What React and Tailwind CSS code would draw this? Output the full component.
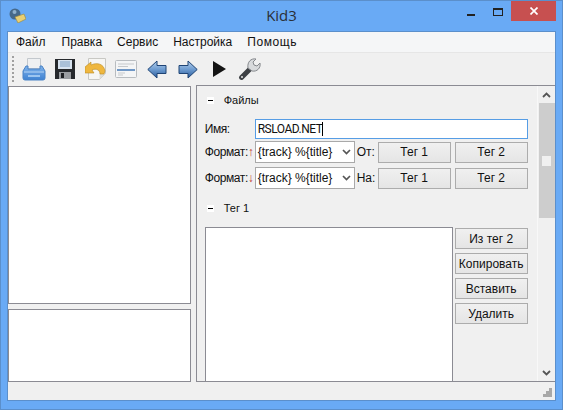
const font = { fontFamily: '"Liberation Sans", Arial, sans-serif' };

const Printer = () => (
  <svg width="24" height="24" viewBox="0 0 24 24">
    <defs>
      <linearGradient id="tray" x1="0" y1="0" x2="0" y2="1">
        <stop offset="0" stopColor="#7fb2ea" />
        <stop offset="1" stopColor="#3f82d2" />
      </linearGradient>
    </defs>
    <path d="M5.5 1.5h13v10h-13z" fill="#eef0f2" stroke="#c3c8cd" />
    <path d="M4 9h2v3h12V9h2l3 5v7a2 2 0 0 1-2 2H3a2 2 0 0 1-2-2v-7z" fill="url(#tray)" stroke="#4a83c6" />
    <path d="M2 15h20" stroke="#b5d4f5" />
    <path d="M6 18h12v2H6z" fill="#9cc5f0" />
  </svg>
);

const Floppy = () => (
  <svg width="20" height="20" viewBox="0 0 20 20">
    <path d="M0 0h20v20H0z" fill="#26292d" />
    <path d="M3 1h14v9H3z" fill="#d7e3f0" />
    <path d="M5 3h10M5 5h10M5 7h10" stroke="#7d9ec2" />
    <path d="M4 13h12v7H4z" fill="#9a9da1" />
    <path d="M6 14h3v5H6z" fill="#1e2023" />
  </svg>
);

const Revert = () => (
  <svg width="21" height="22" viewBox="0 0 21 22">
    <path d="M3.5 .5h17v15l-6 6h-11z" fill="#f6f6f4" stroke="#c8c8c4" />
    <path d="M14.5 21.5v-6h6z" fill="#dededa" />
    <path d="M0 9l6-5v3c6-3 13-1 14 6l-1 3h-4c0-4-4-6-8-4l2 3H0z" fill="#efb73e" stroke="#b98a22" strokeWidth="0.6" />
  </svg>
);

const Tags = () => (
  <svg width="22" height="18" viewBox="0 0 22 18">
    <rect x="0.5" y="0.5" width="21" height="17" rx="1" fill="#f4f5f6" stroke="#b8bcc0" />
    <path d="M3 4h16" stroke="#c6c9cc" />
    <path d="M3 6.5h10" stroke="#c6c9cc" />
    <path d="M2 9h18v2H2z" fill="#6f97c6" />
    <path d="M3 13h7M3 15h5" stroke="#c6c9cc" />
  </svg>
);

const Arrow = ({ flip }) => (
  <svg width="20" height="19" viewBox="0 0 20 19" className={flip ? "-scale-x-100" : ""}>
    <defs>
      <linearGradient id="ar" x1="0" y1="0" x2="0" y2="1">
        <stop offset="0" stopColor="#b5d0ec" />
        <stop offset="0.5" stopColor="#6d9bd0" />
        <stop offset="1" stopColor="#2a5a9a" />
      </linearGradient>
    </defs>
    <path d="M.8 9.5L10 1v4.5h9v8h-9V18z" fill="url(#ar)" stroke="#1f4475" />
  </svg>
);

const Play = () => (
  <svg width="14" height="16" viewBox="0 0 14 16">
    <path d="M1 0l13 8-13 8z" fill="#141414" />
  </svg>
);

const Wrench = () => (
  <svg width="23" height="24" viewBox="0 0 23 24">
    <path d="M1.5 19l9-9 3.5 3.5-9 9a2.5 2.5 0 0 1-3.5-3.5z" fill="#3d4044" />
    <path d="M10 11c-1-6 3-10 8-9l-3 3 1 3 3 1 3-3c1 5-3 9-8 8z" fill="#d8dadc" stroke="#85888c" />
    <circle cx="4" cy="20" r="1" fill="#e5e5e5" />
  </svg>
);

const AppIcon = () => (
  <svg width="17" height="15" viewBox="0 0 17 15">
    <circle cx="6" cy="6" r="5.5" fill="#46698a" />
    <circle cx="5.5" cy="4" r="2" fill="#8fb0cc" />
    <path d="M6 9l9-3 2 5-8 4z" fill="#e9cf74" stroke="#9c8636" strokeWidth="0.6" />
  </svg>
);

const Collapse = ({ label }) => (
  <div className="flex items-center h-[16px] ml-[2px]">
    <span className="w-[7px] h-[7px] bg-white flex items-center justify-center">
      <span className="w-[5px] h-px bg-black" />
    </span>
    <span className="ml-[10px] text-[11px] text-[#111]">{label}</span>
  </div>
);

const Btn = ({ children }) => (
  <button className="w-[73px] h-[21px] border border-[#acacac] bg-gradient-to-b from-[#f0f0f0] to-[#e5e5e5] text-[12px] text-[#111] flex items-center justify-center">
    {children}
  </button>
);

const Combo = () => (
  <div className="w-[100px] h-[22px] border border-[#a9a9a9] bg-white flex items-center pl-[2px] text-[12px] text-[#111]">
    <span className="flex-1">{"{track} %{title}"}</span>
    <svg width="9" height="6" viewBox="0 0 9 6" className="mr-[3px]">
      <path d="M1 1l3.5 3.5L8 1" fill="none" stroke="#555" strokeWidth="1.7" />
    </svg>
  </div>
);

const FormatRow = ({ arrow, side }) => (
  <div className="flex items-center h-[22px]">
    <span className="w-[50px] text-[12px] tracking-[-0.4px] text-[#111] whitespace-nowrap">
      Формат:<span className="text-[#c0392b]">{arrow}</span>
    </span>
    <Combo />
    <span className="w-[23px] pl-[2px] text-[12px] text-[#111]">{side}</span>
    <div className="flex gap-[4px]">
      <Btn>Тег 1</Btn>
      <Btn>Тег 2</Btn>
    </div>
  </div>
);

export default function App() {
  return (
    <div style={font} className="w-[563px] h-[410px] bg-[#69aaf5] border border-[#5b8fcb] flex flex-col overflow-hidden">
      <div className="h-[30px] flex items-start relative shrink-0">
        <div className="pl-[8px] pt-[7px]">
          <AppIcon />
        </div>
        <div className="absolute left-0 right-0 top-[3px] text-center text-[15px] text-[#2a2f36]" style={{ fontFamily: '"Open Sans", sans-serif' }}>
          Kid3
        </div>
        <div className="ml-auto mr-[6px] flex items-start">
          <div className="w-[8px] h-[2px] bg-[#222] mt-[13px] mr-[18px]" />
          <div className="w-[10px] h-[8px] border border-t-2 border-[#222] mt-[7px] mr-[8px]" />
          <div className="w-[45px] h-[20px] bg-[#c75050] flex items-center justify-center">
            <svg width="8" height="8" viewBox="0 0 8 8">
              <path d="M.5.5l7 7M7.5.5l-7 7" stroke="#fff" strokeWidth="1.7" />
            </svg>
          </div>
        </div>
      </div>

      <div className="flex-1 mx-[6px] mb-[8px] border border-[#5b8fcb] bg-[#f0f0f0] flex flex-col min-h-0">
        <div className="h-[21px] bg-[#f5f6f7] border-b border-[#e6e6e6] flex items-center pl-[8px] gap-[15px] text-[12px] text-[#111] shrink-0">
          <span className="mr-px">Файл</span>
          <span>Правка</span>
          <span>Сервис</span>
          <span>Настройка</span>
          <span className="tracking-[0.6px]">Помощь</span>
        </div>

        <div className="h-[32px] flex items-center shrink-0 pl-[4px]">
          <div className="w-[2px] h-[26px] border-l-2 border-dotted border-[#a0a0a0] mr-[8px]" />
          <div className="flex items-center">
            <div className="w-[24px] mr-[8px] flex justify-center"><Printer /></div>
            <div className="w-[22px] mr-[8px] flex justify-center"><Floppy /></div>
            <div className="w-[22px] mr-[9px] flex justify-center"><Revert /></div>
            <div className="w-[22px] mr-[10px] flex justify-center"><Tags /></div>
            <div className="w-[20px] mr-[11px] flex justify-center"><Arrow /></div>
            <div className="w-[20px] mr-[14px] flex justify-center"><Arrow flip /></div>
            <div className="w-[14px] mr-[12px] flex justify-center"><Play /></div>
            <Wrench />
          </div>
        </div>

        <div className="flex-1 flex min-h-0">
          <div className="w-[183px] flex flex-col gap-[5px] pt-[1px]">
            <div className="flex-1 bg-white border border-[#8b8b93]" />
            <div className="h-[73px] bg-white border border-[#8b8b93]" />
          </div>
          <div className="ml-[5px] w-[360px] border border-r-0 border-[#8b8b93] flex min-h-0">
            <div className="flex-1 flex flex-col pl-[8px] pr-[9px] pt-[6px] min-w-0">
              <Collapse label="Файлы" />
              <div className="flex items-center h-[20px] mt-[11px]">
                <span className="w-[50px] text-[12px] tracking-[-0.4px] text-[#111]">Имя:</span>
                <div className="w-[273px] h-[20px] border border-[#569de5] bg-white flex items-center pl-[2px] text-[12px] tracking-[-0.5px] text-[#111]" style={{ fontFamily: "Roboto, sans-serif" }}>
                  RSLOAD.NET<span className="w-px h-[14px] bg-black" />
                </div>
              </div>
              <div className="mt-[2px]"><FormatRow arrow="↑" side="От:" /></div>
              <div className="mt-[4px]"><FormatRow arrow="↓" side="На:" /></div>
              <div className="mt-[11px]"><Collapse label="Тег 1" /></div>
              <div className="flex-1 flex mt-[11px] min-h-0">
                <div className="w-[248px] bg-white border border-[#8b8b93] border-b-0" />
                <div className="ml-[2px] pt-[1px] flex flex-col gap-[4px]">
                  <Btn>Из тег 2</Btn>
                  <Btn>Копировать</Btn>
                  <Btn>Вставить</Btn>
                  <Btn>Удалить</Btn>
                </div>
              </div>
            </div>
            <div className="w-[18px] border-l border-[#f8f8f8] flex flex-col items-center shrink-0">
              <div className="h-[17px] flex items-center justify-center">
                <svg width="9" height="6" viewBox="0 0 9 6">
                  <path d="M1 5l3.5-3.5L8 5" fill="none" stroke="#555" strokeWidth="1.8" />
                </svg>
              </div>
              <div className="w-[16px] h-[115px] bg-[#cdcdcd] flex items-center justify-center">
                <div className="w-[9px] h-[10px] bg-[#f0f0f0]" />
              </div>
              <div className="flex-1" />
              <div className="h-[17px] flex items-center justify-center">
                <svg width="9" height="6" viewBox="0 0 9 6">
                  <path d="M1 1l3.5 3.5L8 1" fill="none" stroke="#555" strokeWidth="1.8" />
                </svg>
              </div>
            </div>
          </div>
        </div>

        <div className="h-[18px] shrink-0 flex justify-end items-end pr-[3px] pb-[3px]">
          <svg width="9" height="9" viewBox="0 0 9 9" fill="#a8a8a8">
            <path d="M6 0h3v3H6zM3 3h3v3H3zM6 3h3v3H6zM0 6h3v3H0zM3 6h3v3H3zM6 6h3v3H6z" />
          </svg>
        </div>
      </div>
    </div>
  );
}
